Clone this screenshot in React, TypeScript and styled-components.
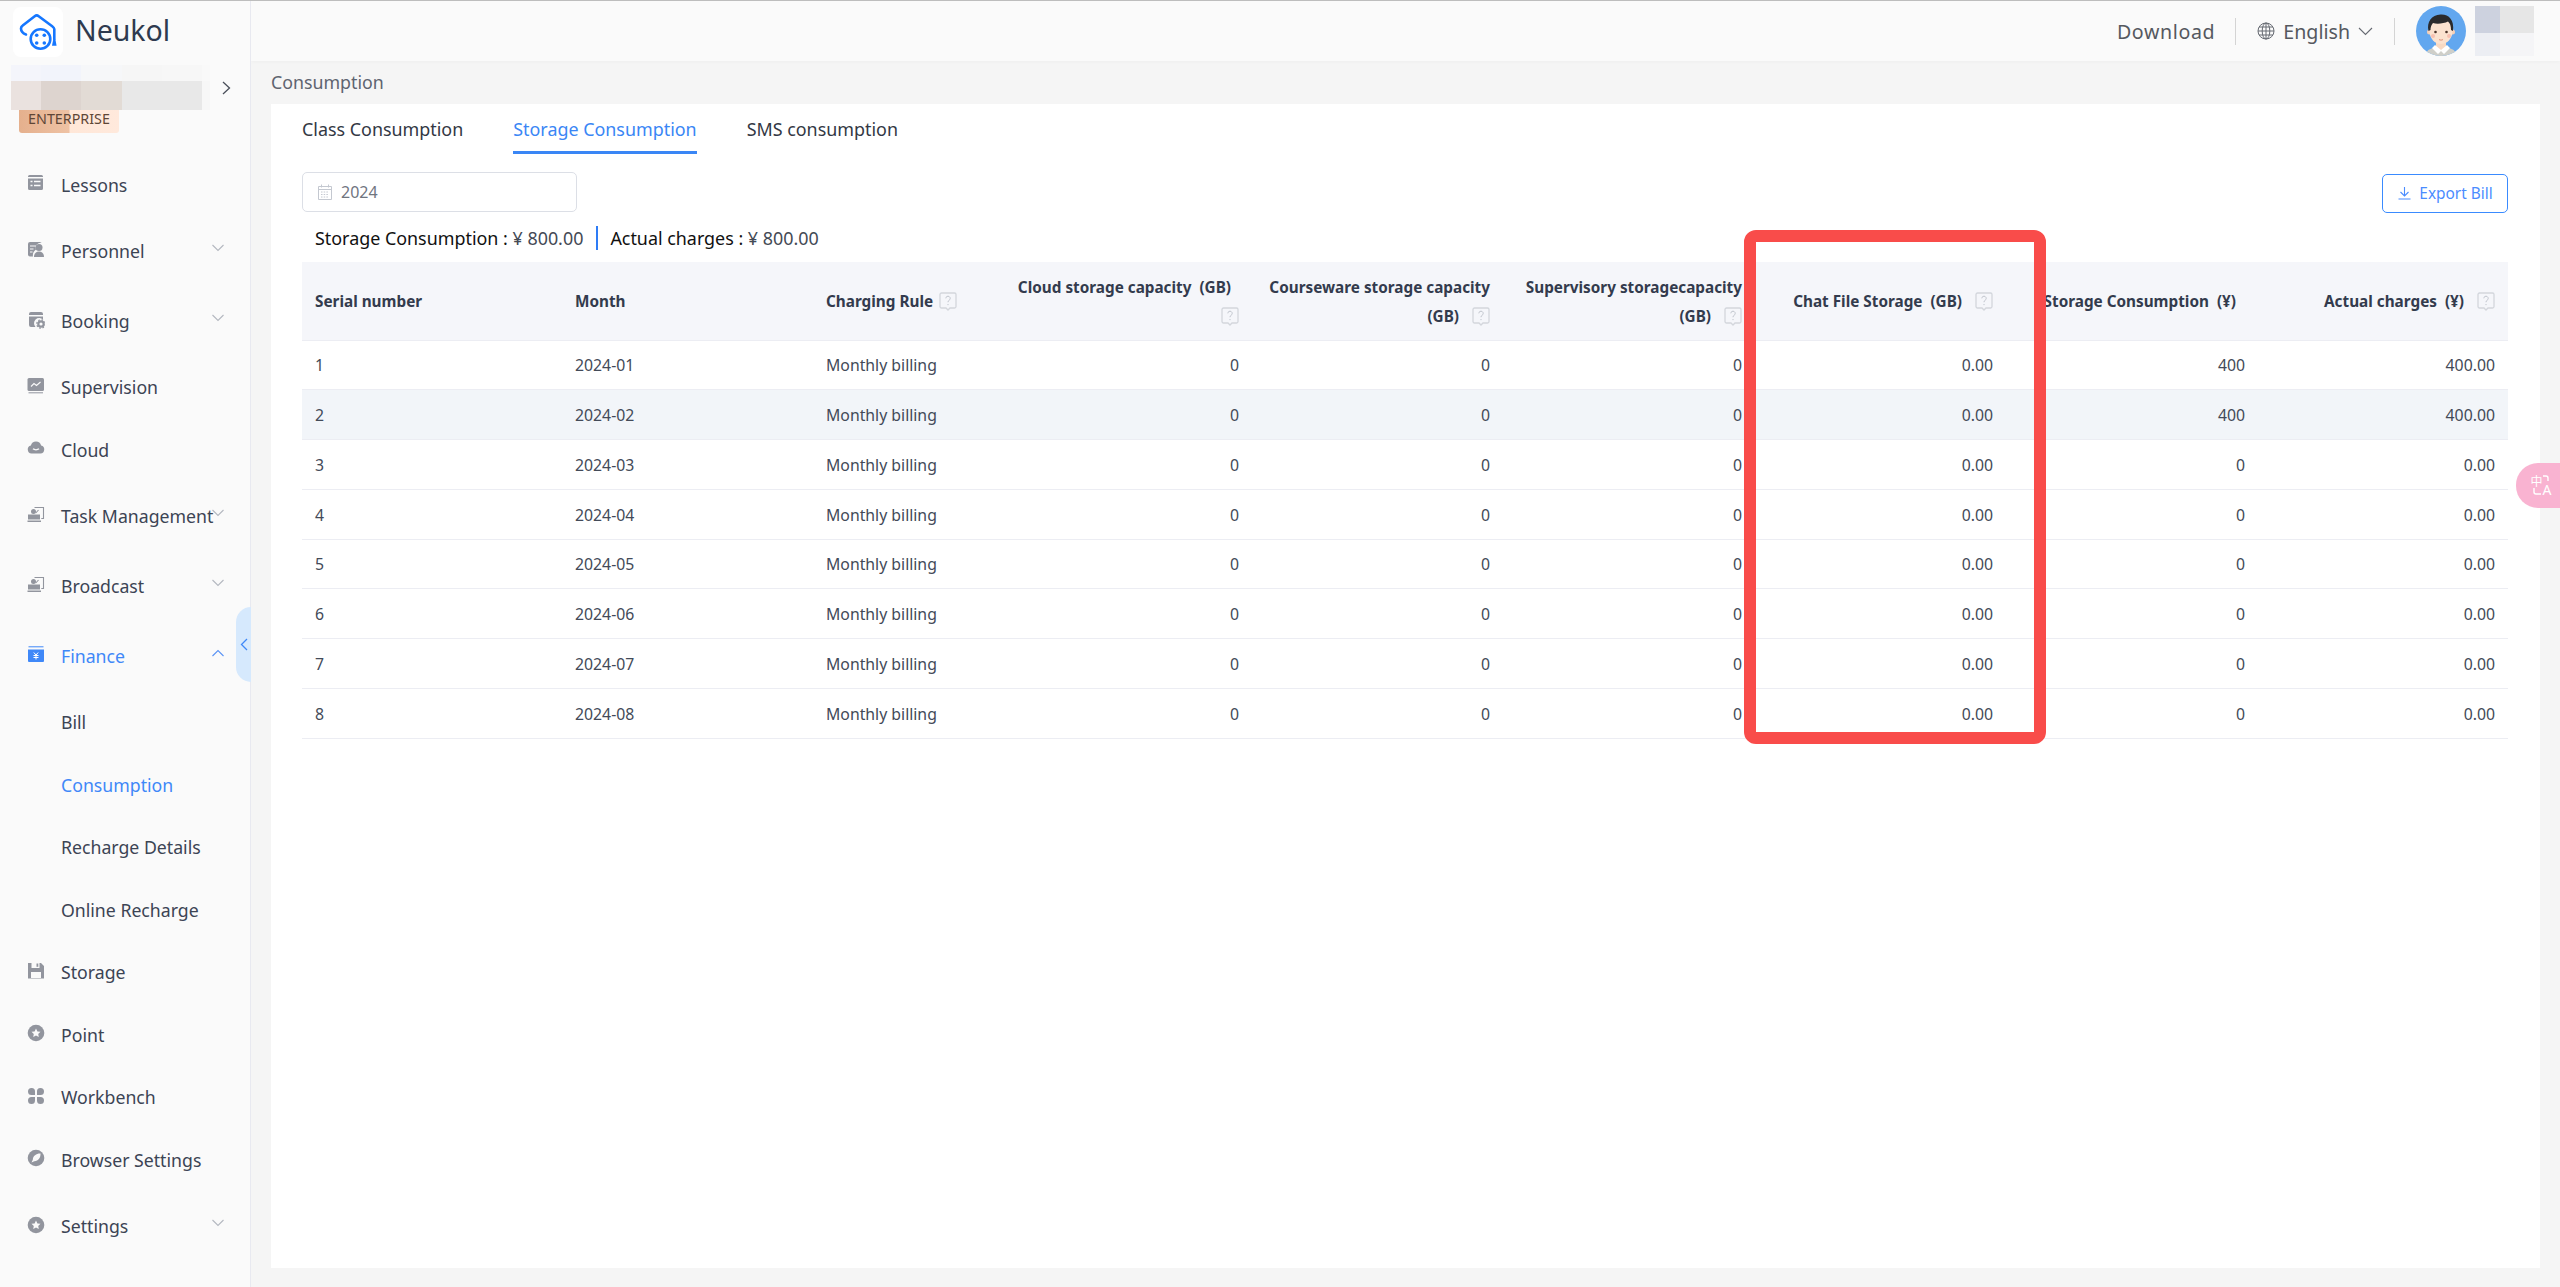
import * as React from 'react'
import styled, { createGlobalStyle } from 'styled-components'

const FONT = '"Noto Sans", "Noto Sans CJK SC", sans-serif'
const BLUE = '#3a86f5'
const COLUMNS = '260px 251px 189px 250px 251px 252px 251px 252px 250px'

const GlobalStyle = createGlobalStyle`
    html, body {
        margin: 0;
        padding: 0;
        height: 100%;
        overflow: hidden;
    }
    body {
        font-family: ${FONT};
        background: #f5f5f5;
    }
    * {
        box-sizing: border-box;
    }
`

const Page = styled.div`
    position: relative;
    display: flex;
    width: 2560px;
    height: 1287px;
    border-top: 1px solid #bdbdbd;
    overflow: hidden;
`

const Sidebar = styled.aside`
    position: relative;
    flex: 0 0 251px;
    display: flex;
    flex-direction: column;
    background: #fafafa;
    border-right: 1px solid #e8e9f0;
`

const Brand = styled.div`
    display: flex;
    align-items: center;
    gap: 12px;
    height: 60px;
    padding: 6px 0 4px 13px;
`

const LogoTile = styled.div`
    width: 50px;
    height: 50px;
    border-radius: 8px;
    background: #fff;
`

const BrandName = styled.div`
    font-size: 28.5px;
    color: #2e3a4f;
    margin-top: -4px;
`

const OrgRow = styled.div`
    display: flex;
    align-items: center;
    gap: 12px;
    margin: 4px 0 0 11px;
`

const Mosaic = styled.div<{ $columns: string; $rows: string }>`
    display: grid;
    grid-template-columns: ${props => props.$columns};
    grid-template-rows: ${props => props.$rows};
`

const MosaicCell = styled.div<{ $color: string }>`
    background: ${props => props.$color};
`

const EnterpriseBadge = styled.div`
    width: 100px;
    height: 23px;
    margin-left: 19px;
    border-radius: 0 0 3px 3px;
    background: linear-gradient(90deg, #e5b08d 0%, #eec2a4 50%, #ffe7d8 51%, #ffe9dc 100%);
    color: #5e4636;
    font-size: 14.3px;
    line-height: 17px;
    text-align: center;
    white-space: nowrap;
`

const Nav = styled.nav`
    display: flex;
    flex-direction: column;
    padding-top: 20.5px;
`

const NavItem = styled.div<{ $tall?: boolean; $active?: boolean }>`
    position: relative;
    display: flex;
    align-items: center;
    height: ${props => (props.$tall ? '70px' : '62.5px')};
    padding-left: 27px;
    font-size: 17.7px;
    white-space: nowrap;
    color: ${props => (props.$active ? '#3f88f8' : '#3c4454')};
`

const NavIconSlot = styled.span`
    flex: 0 0 34px;
    display: flex;
    align-items: center;
    height: 18px;
    margin-top: -3px;
`

const NavCaret = styled.svg`
    position: absolute;
    left: 212px;
    top: 50%;
    margin-top: -7px;
    width: 12px;
    height: 8px;
`

const CollapseHandle = styled.div`
    position: absolute;
    top: 606px;
    right: -1px;
    display: flex;
    align-items: center;
    padding-left: 4px;
    width: 15px;
    height: 75px;
    border-radius: 16px 0 0 16px;
    background: #d6e9fd;
`

const Main = styled.main`
    flex: 1;
    display: flex;
    flex-direction: column;
    min-width: 0;
`

const TopBar = styled.header`
    flex: 0 0 60px;
    display: flex;
    align-items: center;
    justify-content: flex-end;
    padding-right: 26px;
    background: #fafafa;
    box-shadow: 0 1px 4px rgba(0, 0, 0, 0.03);
    color: #55585f;
    font-size: 19.6px;
`

const TopDivider = styled.span`
    width: 1px;
    height: 27px;
    margin: 0 21px 0 20px;
    background: #d4d4d4;
`

const Download = styled.span`
    letter-spacing: 0.65px;
`

const Language = styled.span`
    display: flex;
    align-items: center;
    gap: 8px;
    margin-right: 1px;
`

const AvatarWrap = styled.div`
    display: flex;
    align-items: center;
    gap: 9px;
`

const Content = styled.div`
    flex: 1;
    display: flex;
    flex-direction: column;
    padding: 0 20px 19px 20px;
`

const Breadcrumb = styled.div`
    flex: 0 0 43px;
    display: flex;
    align-items: center;
    padding-bottom: 2px;
    font-size: 17.8px;
    color: #5e6470;
`

const Card = styled.section`
    flex: 1;
    padding: 0 32px 0 31px;
    background: #fff;
`

const Tabs = styled.div`
    display: flex;
    gap: 50px;
    height: 49.5px;
`

const Tab = styled.div<{ $active?: boolean }>`
    padding-top: 12px;
    line-height: 26px;
    font-size: 17.9px;
    white-space: nowrap;
    color: ${props => (props.$active ? BLUE : '#333844')};
    border-bottom: 3px solid ${props => (props.$active ? BLUE : 'transparent')};
`

const Toolbar = styled.div`
    display: flex;
    justify-content: space-between;
    align-items: flex-start;
    height: 40px;
    margin-top: 18.5px;
`

const DateField = styled.div`
    display: flex;
    align-items: center;
    gap: 9px;
    width: 275px;
    height: 40px;
    padding-left: 15px;
    border: 1px solid #dcdfe6;
    border-radius: 5px;
    font-size: 16px;
    color: #70757f;
`

const ExportButton = styled.button`
    display: flex;
    align-items: center;
    justify-content: center;
    gap: 8px;
    width: 126px;
    height: 39px;
    margin-top: 2px;
    padding: 0 0 0 1px;
    background: #fff;
    border: 1px solid #3a8bff;
    border-radius: 5px;
    font-family: ${FONT};
    font-size: 15.4px;
    color: #4a8cff;
`

const Summary = styled.div`
    display: flex;
    align-items: center;
    height: 50px;
    padding: 1px 0 0 13px;
    font-size: 17.9px;
    color: #111;
`

const SummaryValue = styled.span`
    color: #444a55;
    white-space: pre;
`

const SummaryDivider = styled.span`
    width: 2px;
    height: 24px;
    margin: 0 12px 0 13px;
    background: #2e7cf6;
`

const HeaderRow = styled.div`
    display: grid;
    grid-template-columns: ${COLUMNS};
    height: 78.5px;
    background: #f5f6fa;
    border-bottom: 1px solid #ecedf3;
`

const HeaderCell = styled.div<{ $right?: boolean; $pad?: number }>`
    align-self: center;
    padding: 2px ${props => props.$pad ?? 13}px 0 13px;
    font-size: 15.3px;
    font-weight: 700;
    line-height: 29px;
    color: #333b4d;
    text-align: ${props => (props.$right ? 'right' : 'left')};
`

const Row = styled.div<{ $striped?: boolean }>`
    display: grid;
    grid-template-columns: ${COLUMNS};
    align-items: center;
    height: 49.75px;
    background: ${props => (props.$striped ? '#f2f5f9' : '#fff')};
    border-bottom: 1px solid #ecedf3;
`

const Cell = styled.div<{ $right?: boolean }>`
    padding: 1px 13px 0;
    font-size: 15.8px;
    color: #434a58;
    text-align: ${props => (props.$right ? 'right' : 'left')};
`

const HelpGlyph = styled.svg<{ $gap?: number }>`
    display: inline-block;
    width: 18px;
    height: 19px;
    margin-left: ${props => props.$gap ?? 9}px;
    vertical-align: -4px;
`

const Highlight = styled.div`
    position: absolute;
    top: 229px;
    left: 1744px;
    width: 302px;
    height: 514px;
    border: 12px solid #f94c4a;
    border-radius: 12px;
    pointer-events: none;
`

const TranslateFab = styled.div`
    position: absolute;
    top: 462px;
    right: 0;
    width: 44px;
    height: 45px;
    border-radius: 22px 0 0 22px;
    background: rgba(248, 172, 205, 0.92);
`

const Caret = ({ up }: { up?: boolean }) => (
    <NavCaret viewBox="0 0 12 8" fill="none" stroke={up ? '#5a93f5' : '#b4b8c0'} strokeWidth="1.1">
        <path d={up ? 'M.5 7 6 1.5 11.5 7' : 'M.5 1 6 6.5 11.5 1'} />
    </NavCaret>
)

const HelpIcon = ({ gap }: { gap?: number }) => (
    <HelpGlyph $gap={gap} viewBox="0 0 18 19" fill="none">
        <path d="M2.5 1h13a1.5 1.5 0 0 1 1.5 1.500v12a1.500 1.500 0 0 1-1.500 1.500H11l-2 2-2-2H2.500A1.500 1.500 0 0 1 1 14.500v-12A1.500 1.500 0 0 1 2.500 1Z" stroke="#d3d6dc" strokeWidth="1.3" />
        <path d="M6.800 6.300a2.200 2.200 0 1 1 3.300 2c-.8.500-1.100.9-1.100 1.900" stroke="#c0c4cc" strokeWidth="1" />
        <circle cx="9" cy="12.600" r=".7" fill="#c0c4cc" />
    </HelpGlyph>
)

const NavIcon = ({ name, color = '#92959e' }: { name: string; color?: string }) => {
    const shapes: Record<string, React.ReactNode> = {
        lessons: (
            <>
                <path d="M1 2.500A1.500 1.500 0 0 1 2.500 1h12A1.500 1.500 0 0 1 16 2.500V3H1ZM1 4.500h15v10a1.500 1.500 0 0 1-1.500 1.500h-12A1.500 1.500 0 0 1 1 14.500Z" fill={color} />
                <path d="M3.500 7.500h2M7 7.500h6.500M3.500 11.500h2M7 11.500h6.500" stroke="#fafafa" strokeWidth="1.500" />
            </>
        ),
        personnel: (
            <>
                <path d="M1 3a2 2 0 0 1 2-2h10a2 2 0 0 1 1.600.800A5 5 0 0 0 9 8.500 7 7 0 0 0 6 15.500H3a2 2 0 0 1-2-2Z" fill={color} />
                <circle cx="12" cy="6.500" r="3.500" fill={color} />
                <path d="M7 16c0-3.500 2-5.500 5-5.500s5 2 5 5.500Z" fill={color} />
                <path d="M3 5h6M3 8h3.500M3 11h2.500" stroke="#fafafa" strokeWidth="1.200" />
            </>
        ),
        booking: (
            <>
                <path d="M2 3a2 2 0 0 1 2-2h10a2 2 0 0 1 2 2v1H2ZM2 5.500h14v3.200A5 5 0 0 0 8.500 16H4a2 2 0 0 1-2-2Z" fill={color} />
                <circle cx="14" cy="13" r="2.700" fill="none" stroke={color} strokeWidth="2.200" />
                <circle cx="14" cy="13" r="4.200" fill="none" stroke={color} strokeWidth="1.200" strokeDasharray="1.600 1.700" />
            </>
        ),
        supervision: (
            <>
                <rect x=".5" y="1" width="16.500" height="13" rx="1.500" fill={color} />
                <path d="M1.500 15.800h14.500" stroke={color} strokeWidth="1" />
                <path d="M4 9.500 7 6.500l2.500 2 4-3.500" fill="none" stroke="#fafafa" strokeWidth="1.100" />
            </>
        ),
        cloud: (
            <>
                <path d="M4.500 14.500a4 4 0 0 1-.6-7.900A5.400 5.400 0 0 1 9 2.500a5.400 5.400 0 0 1 5.100 4.100 4 4 0 0 1-.6 7.900Z" fill={color} />
                <path d="M6 9.800c1.400 1.300 4.600 1.300 6 0" fill="none" stroke="#fafafa" strokeWidth="1.300" />
            </>
        ),
        task: (
            <>
                <path d="M7.500 1.500h9v11h-2.200" fill="none" stroke={color} strokeWidth="1.100" />
                <path d="M11.500 4 8.800 7" fill="none" stroke={color} strokeWidth="1.100" />
                <circle cx="6.500" cy="5.500" r="2.500" fill={color} />
                <path d="M1 8.500h12v5H1ZM.5 14.500h13.500V16H.5Z" fill={color} />
            </>
        ),
        finance: (
            <>
                <path d="M1.500.800h15" stroke={color} strokeWidth="1" />
                <path d="M1 3.500h16v11.500a1 1 0 0 1-1 1H2a1 1 0 0 1-1-1Z" fill={color} />
                <path d="M6.800 6.500 9 9l2.200-2.500M6.500 9.500h5M6.500 11.500h5M9 9v4.500" fill="none" stroke="#fff" strokeWidth="1" />
            </>
        ),
        storage: (
            <>
                <path d="M1 1h3.500v5h8V1H14l3 3v12.500H1ZM4 10h10v6H4Z" fill={color} fillRule="evenodd" />
                <path d="M9.500 1.500h1.800v3.300H9.500Z" fill={color} />
            </>
        ),
        point: (
            <>
                <circle cx="9" cy="9" r="8.300" fill={color} />
                <path d="m9 4.500 1.400 2.900 3.100.4-2.300 2.200.6 3.100L9 11.600 6.200 13.100l.6-3.100-2.300-2.200 3.100-.4Z" fill="#fafafa" />
            </>
        ),
        workbench: (
            <>
                <path d="M4.500 1A3.400 3.400 0 0 1 8 4.500V8H4.500a3.500 3.500 0 0 1 0-7ZM13.500 1a3.500 3.500 0 0 1 0 7H10V4.500A3.400 3.400 0 0 1 13.500 1ZM4.500 10H8v3.500A3.500 3.500 0 1 1 4.500 10ZM10 10h3.500a3.500 3.500 0 1 1-3.500 3.500Z" fill={color} />
            </>
        ),
        browser: (
            <>
                <circle cx="9" cy="9" r="8.300" fill={color} />
                <path d="M13.500 4.500c.2 4-2 7.600-6.200 7.800l-2.800 1.200 1.300-2.800C6 6.700 9.500 4.300 13.500 4.500Z" fill="#fafafa" />
            </>
        ),
    }
    return (
        <svg width="18" height="18" viewBox="0 0 18 18">
            {shapes[name]}
        </svg>
    )
}

const Logo = () => (
    <LogoTile>
        <svg width="50" height="50" viewBox="0 0 50 50" fill="none" stroke="#1677ff">
            <path d="M13 27.500c-2.800-1-5-3-5-6 0-1.300.6-2.200 1.700-3l12-9.300c1.300-1 2.700-1 4 0l13.500 10c1.300 1 2 1.600 2.100 2.800v10" strokeWidth="2.600" strokeLinecap="round" strokeLinejoin="round" />
            <circle cx="27.500" cy="32" r="9.800" strokeWidth="2.600" />
            <g fill="#1677ff" stroke="none">
                <circle cx="23.700" cy="28.200" r="1.800" />
                <circle cx="31.300" cy="28.200" r="1.800" />
                <circle cx="23.700" cy="36" r="1.800" />
                <circle cx="31.300" cy="36" r="1.800" />
                <path d="M40.300 32h2l1.300 6.700h-4.600Z" />
            </g>
        </svg>
    </LogoTile>
)

const Avatar = () => (
    <svg width="50" height="50" viewBox="0 0 50 50">
        <defs>
            <clipPath id="avatar-clip">
                <circle cx="25" cy="25" r="25" />
            </clipPath>
        </defs>
        <g clipPath="url(#avatar-clip)">
            <rect width="50" height="50" fill="#62a7ef" />
            <path d="M9 50c1-7 8-9 16-9s15 2 16 9Z" fill="#cfcfc9" />
            <path d="M20 34h10v7l-5 4-5-4Z" fill="#f8d9c2" />
            <path d="m19 39 6 5 6-5 3 3-6 6-3-3-3 3-6-6Z" fill="#fff" />
            <circle cx="13.500" cy="26" r="2.500" fill="#f6cfb6" />
            <circle cx="36.500" cy="26" r="2.500" fill="#f6cfb6" />
            <ellipse cx="25" cy="25" rx="11.500" ry="13" fill="#fbe2cf" />
            <path d="M12.500 25c-2-9 3-16 12-16.500 8-.5 14 5 12.500 16.500l-2-1c0-4-1-7-3-8.500-4 2-11 3-15 1.500-2 2-2.500 5-2.500 7Z" fill="#2a2a2c" />
            <circle cx="19.500" cy="26" r="1.300" fill="#4a3328" />
            <circle cx="30.500" cy="26" r="1.300" fill="#4a3328" />
            <circle cx="17" cy="30" r="2" fill="#f7c0b0" />
            <circle cx="33" cy="30" r="2" fill="#f7c0b0" />
            <path d="M23 33.500c1.200.8 2.800.8 4 0" fill="none" stroke="#d98a74" strokeWidth=".9" />
        </g>
    </svg>
)

const navItems = [
    { label: 'Lessons', icon: 'lessons' },
    { label: 'Personnel', icon: 'personnel', tall: true },
    { label: 'Booking', icon: 'booking', tall: true },
    { label: 'Supervision', icon: 'supervision' },
    { label: 'Cloud', icon: 'cloud' },
    { label: 'Task Management', icon: 'task', tall: true },
    { label: 'Broadcast', icon: 'task', tall: true },
    { label: 'Finance', icon: 'finance', tall: true, open: true },
    { label: 'Bill' },
    { label: 'Consumption', active: true },
    { label: 'Recharge Details' },
    { label: 'Online Recharge' },
    { label: 'Storage', icon: 'storage' },
    { label: 'Point', icon: 'point' },
    { label: 'Workbench', icon: 'workbench' },
    { label: 'Browser Settings', icon: 'browser' },
    { label: 'Settings', icon: 'point', tall: true },
]

const orgCells = [
    '#f4f5fb', '#f2f4fb', '#f6f7f9', '#f6f6f6', '#f7f7f7', '#f9f9f9',
    '#eae2df', '#ddd4cf', '#e2dbd5', '#e8e8e8', '#e8e8e8', '#f7f7f7',
]
const nameCells = ['#cdd2df', '#e6e6e6', '#eceef3', '#f5f5f7']

const rows = [
    ['1', '2024-01', '400', '400.00'],
    ['2', '2024-02', '400', '400.00'],
    ['3', '2024-03', '0', '0.00'],
    ['4', '2024-04', '0', '0.00'],
    ['5', '2024-05', '0', '0.00'],
    ['6', '2024-06', '0', '0.00'],
    ['7', '2024-07', '0', '0.00'],
    ['8', '2024-08', '0', '0.00'],
]

const App = () => (
    <Page>
        <GlobalStyle />
        <Sidebar>
            <Brand>
                <Logo />
                <BrandName>Neukol</BrandName>
            </Brand>
            <OrgRow>
                <Mosaic $columns="30px 40px 41px 40px 40px 8px" $rows="16px 29px">
                    {orgCells.map((color, i) => <MosaicCell key={i} $color={color} />)}
                </Mosaic>
                <svg width="9" height="14" viewBox="0 0 9 14" fill="none" stroke="#4a4f5a" strokeWidth="1.300">
                    <path d="m1 1 6.500 6L1 13" />
                </svg>
            </OrgRow>
            <EnterpriseBadge>ENTERPRISE</EnterpriseBadge>
            <Nav>
                {navItems.map(item => {
                    const highlighted = item.active || item.open
                    return (
                        <NavItem key={item.label} $tall={item.tall} $active={highlighted}>
                            <NavIconSlot>
                                {item.icon && <NavIcon name={item.icon} color={highlighted ? '#3f88f8' : undefined} />}
                            </NavIconSlot>
                            {item.label}
                            {item.tall && <Caret up={item.open} />}
                        </NavItem>
                    )
                })}
            </Nav>
            <CollapseHandle>
                <svg width="8" height="13" viewBox="0 0 8 13" fill="none" stroke="#3f88f8" strokeWidth="1.300">
                    <path d="M7 1 1.500 6.500 7 12" />
                </svg>
            </CollapseHandle>
        </Sidebar>
        <Main>
            <TopBar>
                <Download>Download</Download>
                <TopDivider />
                <Language>
                    <svg width="18" height="18" viewBox="0 0 18 18" fill="none" stroke="#666a72" strokeWidth="1">
                        <circle cx="9" cy="9" r="8" />
                        <ellipse cx="9" cy="9" rx="3.800" ry="8" />
                        <path d="M9 1v16M1 9h16M2 5h14M2 13h14" />
                    </svg>
                    English
                    <svg width="15" height="9" viewBox="0 0 15 9" fill="none" stroke="#666a72" strokeWidth="1.100">
                        <path d="m1 1 6.500 6.500L14 1" />
                    </svg>
                </Language>
                <TopDivider />
                <AvatarWrap>
                    <Avatar />
                    <Mosaic $columns="25px 34px" $rows="27px 23px">
                        {nameCells.map((color, i) => <MosaicCell key={i} $color={color} />)}
                    </Mosaic>
                </AvatarWrap>
            </TopBar>
            <Content>
                <Breadcrumb>Consumption</Breadcrumb>
                <Card>
                    <Tabs>
                        <Tab>Class Consumption</Tab>
                        <Tab $active>Storage Consumption</Tab>
                        <Tab>SMS consumption</Tab>
                    </Tabs>
                    <Toolbar>
                        <DateField>
                            <svg width="14" height="16" viewBox="0 0 14 16" fill="none" stroke="#c4c8d0" strokeWidth="1">
                                <path d="M.5 2.500h13v13H.5ZM.5 5.500h13M3.500.500v3M10.500.500v3" />
                                <path d="M3 8h8M3 10.500h8M3 13h8" strokeDasharray="1.500 1.200" />
                            </svg>
                            2024
                        </DateField>
                        <ExportButton>
                            <svg width="13" height="13" viewBox="0 0 13 13" fill="none" stroke="#4a8cff" strokeWidth="1.100">
                                <path d="M6.500 0v8.500M2.500 5l4 4 4-4M.500 12h12" />
                            </svg>
                            Export Bill
                        </ExportButton>
                    </Toolbar>
                    <Summary>
                        Storage Consumption :<SummaryValue> ¥ 800.00</SummaryValue>
                        <SummaryDivider />
                        Actual charges :<SummaryValue> ¥ 800.00</SummaryValue>
                    </Summary>
                    <HeaderRow>
                        <HeaderCell>Serial number</HeaderCell>
                        <HeaderCell>Month</HeaderCell>
                        <HeaderCell>Charging Rule<HelpIcon gap={6} /></HeaderCell>
                        <HeaderCell $right>Cloud storage capacity&nbsp;&nbsp;(GB)&nbsp;&nbsp;<HelpIcon /></HeaderCell>
                        <HeaderCell $right>Courseware storage capacity (GB)&nbsp;<HelpIcon /></HeaderCell>
                        <HeaderCell $right>Supervisory storagecapacity (GB)&nbsp;<HelpIcon /></HeaderCell>
                        <HeaderCell $right>Chat File Storage&nbsp;&nbsp;(GB)&nbsp;<HelpIcon /></HeaderCell>
                        <HeaderCell $right $pad={22}>Storage Consumption&nbsp;&nbsp;(¥)</HeaderCell>
                        <HeaderCell $right>Actual charges&nbsp;&nbsp;(¥)&nbsp;<HelpIcon /></HeaderCell>
                    </HeaderRow>
                    {rows.map(([serial, month, amount, actual], i) => (
                        <Row key={serial} $striped={i === 1}>
                            <Cell>{serial}</Cell>
                            <Cell>{month}</Cell>
                            <Cell>Monthly billing</Cell>
                            <Cell $right>0</Cell>
                            <Cell $right>0</Cell>
                            <Cell $right>0</Cell>
                            <Cell $right>0.00</Cell>
                            <Cell $right>{amount}</Cell>
                            <Cell $right>{actual}</Cell>
                        </Row>
                    ))}
                </Card>
            </Content>
        </Main>
        <Highlight />
        <TranslateFab>
            <svg width="44" height="45" viewBox="0 0 44 45" fill="none">
                <text x="14.500" y="23" fontSize="12" fontFamily='"Noto Sans CJK SC", sans-serif' fill="#fff">中</text>
                <text x="26.500" y="32" fontSize="14" fontFamily={FONT} fill="#fff">A</text>
                <path d="M27 13h3a2 2 0 0 1 2 2v3M18 25v4a2 2 0 0 0 2 2h5" stroke="#fff" strokeWidth="1.400" />
            </svg>
        </TranslateFab>
    </Page>
)

export default App
